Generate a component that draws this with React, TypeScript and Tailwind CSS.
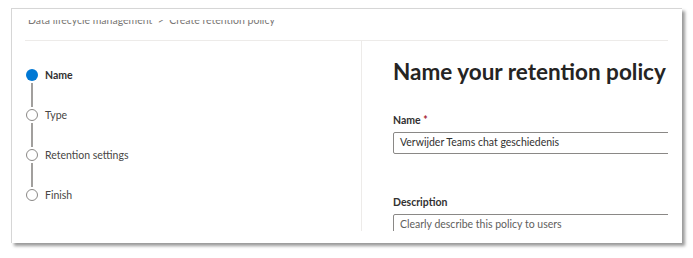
import React from 'react';

const font = { fontFamily: 'Lato, "Open Sans", sans-serif' };

type Step = { label: string; active?: boolean };

const steps: Step[] = [
  { label: 'Name', active: true },
  { label: 'Type' },
  { label: 'Retention settings' },
  { label: 'Finish' },
];

const StepList: React.FC = () => (
  <div className="flex flex-col pl-[14px] pt-[28px]">
    {steps.map((step, i) => (
      <div key={step.label} className="flex flex-col">
        <div className="flex h-[12px] items-center gap-[7px]">
          {step.active ? (
            <span className="h-[12px] w-[12px] shrink-0 rounded-full bg-[#0078d4]" />
          ) : (
            <span className="h-[12px] w-[12px] shrink-0 rounded-full border-[1.5px] border-[#8a8886] bg-white" />
          )}
          <span
            className={
              step.active
                ? 'text-[10.5px] font-bold leading-[14px] text-[#323130]'
                : 'text-[10.5px] leading-[14px] text-[#484644]'
            }
          >
            {step.label}
          </span>
        </div>
        {i < steps.length - 1 && (
          <div className="ml-[5px] my-[2px] h-[24px] w-[2px] bg-[#a19f9d]" />
        )}
      </div>
    ))}
  </div>
);

const App: React.FC = () => {
  return (
    <div className="h-[258px] w-[693px] overflow-hidden bg-white" style={font}>
      <div className="ml-[11px] mt-[8px] h-[235px] w-[671px] border-l border-t border-[#d6d6d6] pl-0 pr-[14px] pt-[11px] pb-[12px] shadow-[3px_3px_3px_rgba(0,0,0,0.4)]">
        <div className="flex h-full w-full flex-col overflow-hidden bg-white">
          <div className="-mt-[7px] h-[14px] shrink-0 pl-[16px] text-[10.5px] leading-[14px] text-[#7a7775] whitespace-nowrap">
            Data lifecycle management&nbsp;&nbsp;&gt;&nbsp;&nbsp;Create retention policy
          </div>
          <div className="ml-[13px] mt-[13px] shrink-0 border-t border-[#edebe9]" />
          <div className="flex min-h-0 flex-1">
            <div className="w-[350px] shrink-0 border-r border-[#edebe9]">
              <StepList />
            </div>
            <div className="min-w-0 flex-1 overflow-hidden pl-[31px] pt-[15px]">
              <h1 className="whitespace-nowrap text-[22.5px] font-bold leading-[32px] text-[#252423]">
                Name your retention policy
              </h1>
              <div className="mt-[25px] text-[10.5px] font-bold leading-[14px] text-[#323130]">
                Name <span className="text-[#a4262c]">*</span>
              </div>
              <div className="mt-[5px] flex h-[22px] w-[400px] items-center rounded-[2px] border border-[#8a8886] pl-[6px] text-[10.5px] text-[#323130]">
                Verwijder Teams chat geschiedenis
              </div>
              <div className="mt-[41px] text-[10.5px] font-bold leading-[14px] text-[#323130]">
                Description
              </div>
              <div className="mt-[5px] flex h-[22px] w-[400px] items-center rounded-[2px] border border-[#8a8886] pl-[6px] text-[10.5px] text-[#605e5c]">
                Clearly describe this policy to users
              </div>
            </div>
          </div>
        </div>
      </div>
    </div>
  );
};

export default App;
